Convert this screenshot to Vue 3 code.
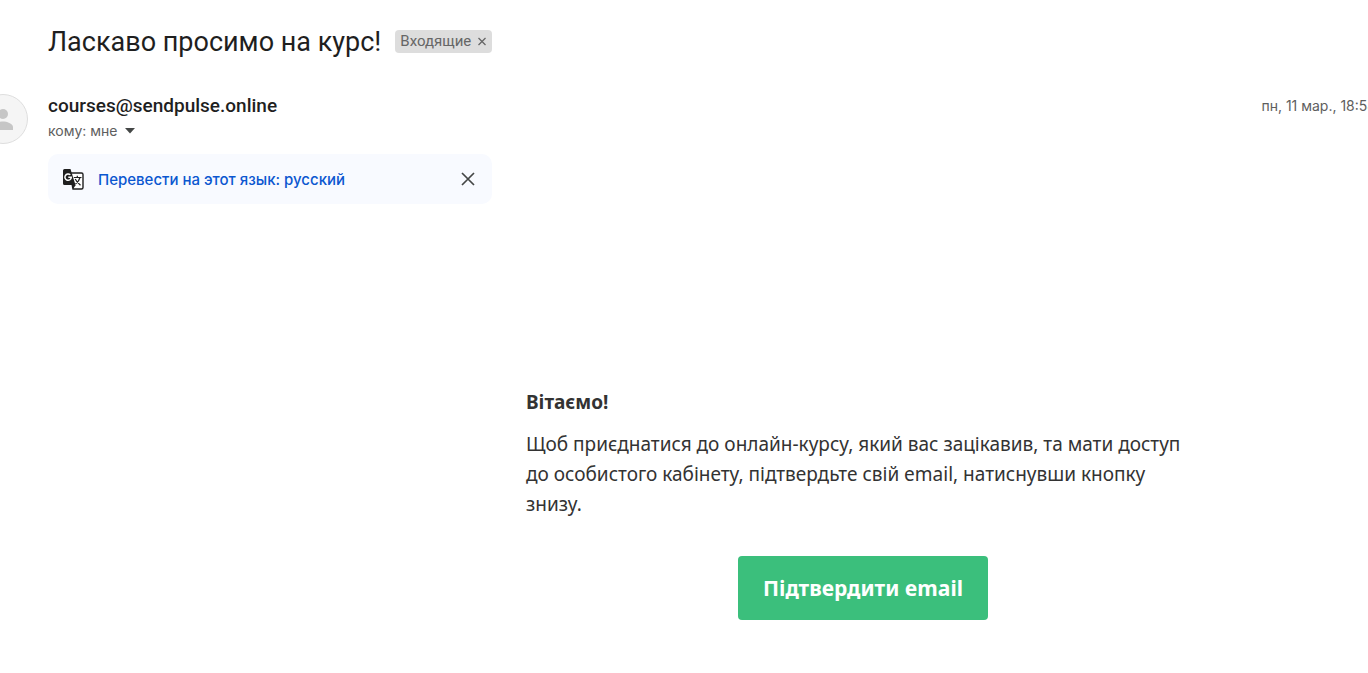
<script setup>
import { ref } from 'vue'

const labelShown = ref(true)
const translateShown = ref(true)
</script>

<template>
  <main class="mail">
    <header class="subject">
      <h1>Ласкаво просимо на курс!</h1>
      <span v-if="labelShown" class="label">
        Входящие
        <button type="button" class="label-close" aria-label="Удалить ярлык" @click="labelShown = false">
          <svg viewBox="0 0 10 10" width="10" height="10" aria-hidden="true">
            <path d="M1.500 2l7 7M8.500 2l-7 7" stroke="#666" stroke-width="1.300" />
          </svg>
        </button>
      </span>
    </header>

    <section class="message">
      <div class="avatar">
        <svg viewBox="0 0 50 50" width="50" height="50" aria-hidden="true">
          <circle cx="25" cy="25" r="24.500" fill="#f5f5f5" stroke="#dedede" />
          <circle cx="25" cy="20" r="5" fill="#c6c6c6" />
          <path d="M15 36v-3c0-3.500 6.500-5.500 10-5.500s10 2 10 5.500v3z" fill="#c6c6c6" />
        </svg>
      </div>

      <div class="details">
        <div class="sender-row">
          <span class="sender">courses@sendpulse.online</span>
          <time class="date">пн, 11 мар., 18:58</time>
        </div>
        <button type="button" class="recipient">
          кому: мне
          <svg viewBox="0 0 10 6" width="10" height="6" aria-hidden="true">
            <path d="M0 0h10L5 5.500z" fill="#444746" />
          </svg>
        </button>

        <div v-if="translateShown" class="translate">
          <svg class="translate-icon" viewBox="0 0 22 22" width="22" height="22" aria-hidden="true">
            <path d="M8 5h11.500q1.500 0 1.500 1.500v13q0 1.500-1.500 1.500H11z" fill="#fff" stroke="#1f1f1f" stroke-width="1.400" />
            <path d="M2.500 1H8.500l1.200 4 3.800 12H2.500Q1 17 1 15.500v-13Q1 1 2.500 1z" fill="#1f1f1f" />
            <path d="M10.500 17h3.300L11 21z" fill="#1f1f1f" />
            <path d="M8.300 6.800A3.200 3.200 0 1 0 9.300 9.300H6.300" fill="none" stroke="#fff" stroke-width="1.500" />
            <path d="M11.800 9.500h7.700M15.300 7.800v1.700M18 9.500c-.7 3-2.500 5-4.500 6.500M13.200 11c1.200 2.500 3 4.200 5.300 6.200" fill="none" stroke="#1f1f1f" stroke-width="1.200" />
          </svg>
          <a href="#" class="translate-link" @click.prevent>Перевести на этот язык: русский</a>
          <button type="button" class="translate-close" aria-label="Закрыть" @click="translateShown = false">
            <svg viewBox="0 0 14 14" width="14" height="14" aria-hidden="true">
              <path d="M1 1l12 12M13 1L1 13" stroke="#444746" stroke-width="1.700" />
            </svg>
          </button>
        </div>
      </div>
    </section>

    <article class="body">
      <div class="letter">
        <h2>Вітаємо!</h2>
        <p>
          Щоб приєднатися до онлайн-курсу, який вас зацікавив, та мати доступ
          до особистого кабінету, підтвердьте свій email, натиснувши кнопку
          знизу.
        </p>
        <a href="#" class="confirm" @click.prevent>Підтвердити email</a>
      </div>
    </article>
  </main>
</template>

<style>
body {
  margin: 0;
  background: #fff;
}
</style>

<style scoped>
.mail {
  overflow: hidden;
  font-family: Inter, Roboto, "Liberation Sans", sans-serif;
  color: #1f1f1f;
}

button {
  border: 0;
  padding: 0;
  background: none;
  font: inherit;
  color: inherit;
  cursor: pointer;
}

svg {
  display: block;
}

.subject {
  display: flex;
  align-items: center;
  gap: 14px;
  padding: 24px 48px 0;
}

h1 {
  margin: 0;
  font-family: Roboto, sans-serif;
  font-size: 27px;
  line-height: 36px;
  font-weight: 400;
}

.label {
  display: flex;
  align-items: center;
  gap: 6px;
  margin-bottom: 2px;
  padding: 0 5px;
  border-radius: 4px;
  background: #ddd;
  color: #666;
  font-family: Roboto, sans-serif;
  font-size: 15px;
  line-height: 23px;
}

.message {
  display: flex;
  gap: 20px;
  margin-top: 34px;
  margin-left: -22px;
}

.avatar {
  flex: none;
}

.details {
  flex: 1;
  min-width: 0;
}

.sender-row {
  display: flex;
  justify-content: space-between;
  line-height: 24px;
  white-space: nowrap;
}

.sender {
  font-family: Roboto, sans-serif;
  font-size: 19px;
  font-weight: 500;
}

.date {
  margin-right: -8px;
  color: #5e5e5e;
  font-size: 14px;
}

.recipient {
  display: flex;
  align-items: center;
  gap: 7px;
  color: #5e5e5e;
  font-size: 14px;
  line-height: 26px;
}

.translate {
  display: flex;
  align-items: center;
  gap: 14px;
  box-sizing: border-box;
  max-width: 444px;
  height: 50px;
  margin-top: 10px;
  padding: 0 17px 0 14px;
  border-radius: 10px;
  background: #f8faff;
}

.translate-link {
  flex: 1;
  color: #0b57d0;
  font-size: 15px;
  font-weight: 500;
  text-decoration: none;
}

.body {
  margin-top: 183px;
  padding-left: 358px;
}

.letter {
  display: flex;
  flex-direction: column;
  max-width: 674px;
  margin: 0 auto;
  color: #333;
  font-family: "Noto Sans", "Open Sans", sans-serif;
  font-size: 19px;
  line-height: 30px;
}

h2 {
  margin: 0 0 12px;
  font-size: 19px;
  font-weight: 700;
}

p {
  margin: 0;
}

.confirm {
  align-self: center;
  margin: 37px 0 48px;
  padding: 0 25px;
  border-radius: 4px;
  background: #3bbf7c;
  color: #fff;
  font-size: 21px;
  line-height: 64px;
  font-weight: 700;
  text-decoration: none;
}
</style>
